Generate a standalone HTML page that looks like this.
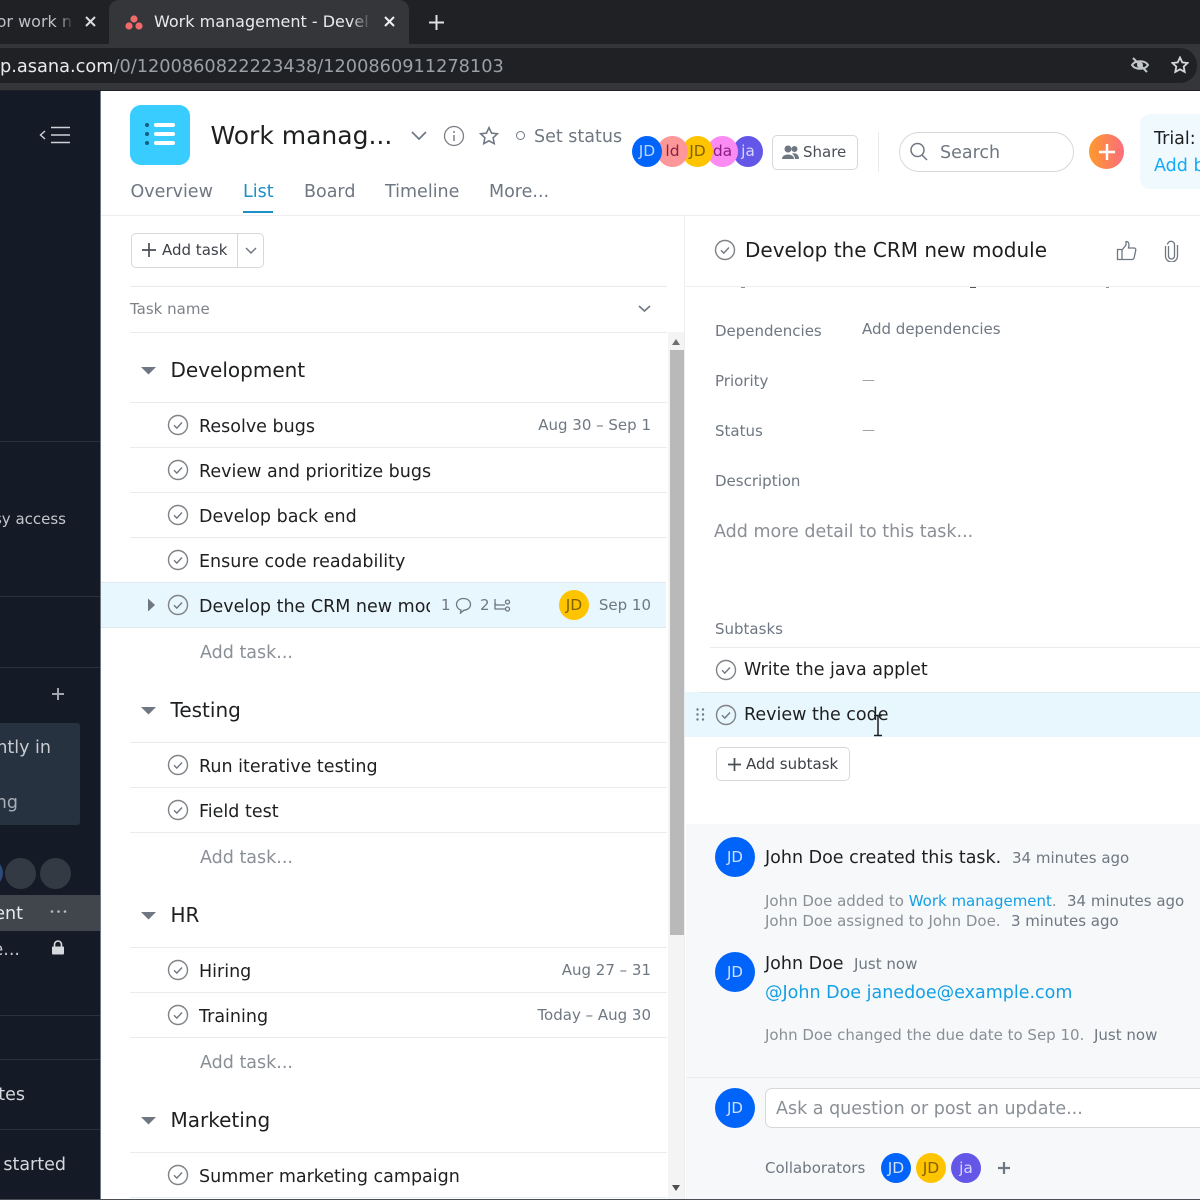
<!DOCTYPE html>
<html><head><meta charset="utf-8"><style>
html,body{margin:0;padding:0;background:#fff}
#p{position:relative;width:1200px;height:1200px;overflow:hidden;background:#fff;font-family:"DejaVu Sans","Liberation Sans",sans-serif;color:#1e1f21;filter:blur(.3px)}
#p div,#p span.t,#p svg{position:absolute}
.t{white-space:nowrap;line-height:0;height:0}
.g{color:#6f7782}.l{color:#8a8f96}
.sb{color:#c3c7cc}
.a{position:absolute;border-radius:50%;text-align:center;color:#fff;overflow:hidden}
.ln{background:#e8ecee;height:1px}
</style></head><body><div id="p">
<svg width="0" height="0" style="position:absolute"><defs>
<symbol id="c" viewBox="0 0 22 22"><circle cx="11" cy="11" r="9.5" fill="none" stroke="#7f8286" stroke-width="1.4"/><path d="M7 11.300l2.800 2.800 5.200-5.600" fill="none" stroke="#6f7782" stroke-width="1.400"/></symbol>
</defs></svg>

<!-- browser chrome -->
<div style="left:0;top:0;width:1200px;height:44px;background:#202124"></div>
<div style="left:109px;top:0;width:300px;height:44px;background:#35363a;border-radius:10px 10px 0 0"></div>
<div style="left:0;top:44px;width:1200px;height:46px;background:#35363a"></div>
<div style="left:0;top:90px;width:1200px;height:1px;background:#202124"></div>
<div style="left:0;top:48px;width:1197px;height:35px;background:#202124;border-radius:0 17px 17px 0"></div>
<span class="t" style="left:-9px;top:21px;font-size:16px;color:#bdc1c6;width:82px;overflow:hidden;height:24px;line-height:24px;margin-top:-11px">for work n</span>
<div style="left:58px;top:10px;width:16px;height:24px;background:linear-gradient(90deg,rgba(32,33,36,0),#202124)"></div>
<svg style="left:84px;top:15px" width="13" height="13"><path d="M2 2l9 9M11 2l-9 9" stroke="#dcdcdc" stroke-width="2"/></svg>
<svg style="left:125px;top:14px" width="18" height="17"><circle cx="9" cy="5" r="3.600" fill="#f06a6a"/><circle cx="4" cy="12" r="3.600" fill="#f06a6a"/><circle cx="14" cy="12" r="3.600" fill="#f06a6a"/></svg>
<span class="t" style="left:154px;top:21px;font-size:16px;color:#e8eaed;width:218px;overflow:hidden;height:24px;line-height:24px;margin-top:-11px">Work management - Devel</span>
<div style="left:350px;top:10px;width:22px;height:24px;background:linear-gradient(90deg,rgba(53,54,58,0),#35363a)"></div>
<svg style="left:383px;top:15px" width="13" height="13"><path d="M2 2l9 9M11 2l-9 9" stroke="#f0f0f0" stroke-width="2"/></svg>
<svg style="left:428px;top:14px" width="17" height="17"><path d="M8.500 1v15M1 8.500h15" stroke="#e0e0e0" stroke-width="2"/></svg>
<span class="t" style="left:0;top:67px;font-size:17.740px;color:#e8eaed">p.asana.com<span style="color:#9aa0a6">/0/1200860822223438/1200860911278103</span></span>
<svg style="left:1130px;top:55px" width="20" height="20" viewBox="0 0 20 20"><path d="M2 10c3-5 13-5 16 0c-3 5-13 5-16 0z" fill="none" stroke="#c4c7c9" stroke-width="2"/><circle cx="10" cy="10" r="3" fill="#c4c7c9"/><path d="M3 3l14 14" stroke="#c4c7c9" stroke-width="2"/></svg>
<svg style="left:1171px;top:56px" width="18" height="18" viewBox="0 0 18 18"><path d="M9 1.500l2.300 4.900 5.200.6-3.800 3.600 1 5.300L9 13.300l-4.700 2.600 1-5.300L1.500 7l5.200-.6z" fill="none" stroke="#d4d6d8" stroke-width="1.800"/></svg>

<!-- sidebar -->
<div style="left:0;top:91px;width:100px;height:1109px;background:#151b26"></div>
<div style="left:100px;top:91px;width:1px;height:1109px;background:#6f7782"></div>
<svg style="left:38px;top:125px" width="34" height="20" fill="none" stroke="#cfd2d6" stroke-width="1.400"><path d="M7 6l-4.500 4 4.500 4"/><path d="M13 2.500h19M13 10h19M13 17.500h19"/></svg>
<div style="left:0;top:441px;width:100px;height:1px;background:#2b323d"></div>
<div style="left:0;top:596px;width:100px;height:1px;background:#2b323d"></div>
<div style="left:0;top:667px;width:100px;height:1px;background:#2b323d"></div>
<div style="left:0;top:1015px;width:100px;height:1px;background:#2b323d"></div>
<div style="left:0;top:1059px;width:100px;height:1px;background:#2b323d"></div>
<div style="left:0;top:1129px;width:100px;height:1px;background:#2b323d"></div>
<span class="t sb" style="right:1134px;top:519px;font-size:15px">asy access</span>
<svg style="left:51px;top:687px" width="14" height="14"><path d="M7 1v12M1 7h12" stroke="#a2a6ac" stroke-width="2"/></svg>
<div style="left:0;top:723px;width:80px;height:102px;background:#273240;border-radius:0 3px 3px 0"></div>
<span class="t" style="right:1149px;top:748px;font-size:17.500px;color:#c8ccd1">ntly in</span>
<span class="t" style="right:1182px;top:803px;font-size:17.500px;color:#a9afb6">ng</span>
<div class="a" style="left:-29px;top:858px;width:32px;height:30px;background:#2f4a78"></div>
<div class="a" style="left:5px;top:858px;width:31px;height:31px;background:#343a43"></div>
<div class="a" style="left:40px;top:858px;width:31px;height:31px;background:#343a43"></div>
<div style="left:0;top:895px;width:100px;height:36px;background:#41454c"></div>
<span class="t" style="right:1177px;top:914px;font-size:17.500px;color:#e8eaec">ent</span>
<svg style="left:50px;top:909px" width="17" height="5" fill="#b7bbc1"><circle cx="2" cy="2.500" r="1.300"/><circle cx="8.500" cy="2.500" r="1.300"/><circle cx="15" cy="2.500" r="1.300"/></svg>
<span class="t" style="right:1180px;top:950px;font-size:17.500px;color:#c3c7cc">e...</span>
<svg style="left:51px;top:940px" width="14" height="15"><path d="M3.500 7V4.500a3.500 3.500 0 0 1 7 0V7" fill="none" stroke="#d5d8dd" stroke-width="1.600"/><rect x="1" y="6.500" width="12" height="8" rx="1" fill="#d5d8dd"/></svg>
<span class="t" style="right:1175px;top:1095px;font-size:17.500px;color:#d5d8dc">tes</span>
<span class="t" style="right:1134px;top:1165px;font-size:17.500px;color:#d5d8dc">started</span>

<!-- project header -->
<div style="left:130px;top:105px;width:60px;height:60px;background:#38ccff;border-radius:11px"></div>
<svg style="left:144px;top:121px" width="32" height="28" fill="#fff"><circle cx="3" cy="4" r="2" fill="#0f5f86"/><circle cx="3" cy="13" r="2" fill="#0f5f86"/><circle cx="3" cy="22" r="2" fill="#0f5f86"/><rect x="10" y="2" width="21" height="4" rx="2"/><rect x="10" y="11" width="21" height="4" rx="2"/><rect x="10" y="20" width="21" height="4" rx="2"/></svg>
<span class="t" style="left:210.500px;top:136px;font-size:25px">Work manag...</span>
<svg style="left:410px;top:130px" width="18" height="12"><path d="M2 2l7 7 7-7" fill="none" stroke="#6f7782" stroke-width="1.700"/></svg>
<svg style="left:443px;top:125px" width="22" height="22"><circle cx="11" cy="11" r="9.500" fill="none" stroke="#7b7f85" stroke-width="1.300"/><path d="M11 10v6" stroke="#7b7f85" stroke-width="1.500"/><circle cx="11" cy="7" r="1" fill="#7b7f85"/></svg>
<svg style="left:479px;top:126px" width="20" height="20" viewBox="0 0 18 18"><path d="M9 1.500l2.300 4.900 5.200.6-3.800 3.600 1 5.300L9 13.300l-4.700 2.600 1-5.300L1.500 7l5.200-.6z" fill="none" stroke="#6f7782" stroke-width="1.400"/></svg>
<div style="left:516px;top:131px;width:7px;height:7px;border:1.500px solid #6f7782;border-radius:50%"></div>
<span class="t g" style="left:534px;top:137px;font-size:17.500px">Set status</span>
<span class="t g" style="left:130.500px;top:192px;font-size:17.500px">Overview</span>
<span class="t" style="left:243px;top:192px;font-size:17.500px;color:#1c8fc4">List</span>
<span class="t g" style="left:304px;top:192px;font-size:17.500px">Board</span>
<span class="t g" style="left:385px;top:192px;font-size:17.500px">Timeline</span>
<span class="t g" style="left:489px;top:192px;font-size:17.500px">More...</span>
<div style="left:243px;top:211px;width:30px;height:2px;background:#1c8fc4"></div>
<div class="ln" style="left:101px;top:215px;width:1099px;background:#eceef0"></div>

<!-- avatars -->
<div class="a" style="left:733px;top:136px;width:30px;height:31px;background:#6457e8;line-height:31px;font-size:15.500px;color:#d8d5ff">ja</div>
<div class="a" style="left:707px;top:136px;width:31px;height:31px;background:#fb8bf2;line-height:31px;font-size:15.500px;color:#8a1d84">da</div>
<div class="a" style="left:682px;top:136px;width:31px;height:31px;background:#ffc400;line-height:31px;font-size:15.500px;color:#7e6100">JD</div>
<div class="a" style="left:657px;top:136px;width:31px;height:31px;background:#fc979a;line-height:31px;font-size:15.500px;color:#8c1f3a">ld</div>
<div class="a" style="left:632px;top:136px;width:30px;height:31px;background:#0064fb;line-height:31px;font-size:15.500px;color:#b9d4ff">JD</div>

<div style="left:772px;top:135px;width:84px;height:33px;border:1.500px solid #d5d9dc;border-radius:5px"></div>
<svg style="left:782px;top:145px" width="17" height="15" fill="#6f7782"><circle cx="6" cy="4" r="3.500"/><circle cx="12.500" cy="4" r="3"/><path d="M0 14c0-6 12-6 12 0z"/><path d="M10 8.500c4-1 7 1 7 5.500h-4c0-2-1-4-3-5.500z"/></svg>
<span class="t" style="left:803px;top:152px;font-size:15px;color:#4a4f56">Share</span>
<div style="left:878px;top:132px;width:1px;height:40px;background:#e8ecee"></div>
<div style="left:899px;top:132px;width:173px;height:38px;border:1.500px solid #d5d9dc;border-radius:20px"></div>
<svg style="left:909px;top:142px" width="20" height="20" fill="none" stroke="#6f7782" stroke-width="1.500"><circle cx="8.500" cy="8" r="6.500"/><path d="M13 13l5 5"/></svg>
<span class="t g" style="left:940px;top:153px;font-size:17.500px">Search</span>
<div class="a" style="left:1089px;top:134px;width:35px;height:35px;background:linear-gradient(90deg,#fd9a2c,#fc6d7d)"></div>
<svg style="left:1098px;top:143px" width="18" height="18"><path d="M9 1v16M1 9h16" stroke="#fff" stroke-width="2.500"/></svg>
<div style="left:1140px;top:114px;width:70px;height:75px;background:#f0f9fe;border-radius:10px"></div>
<span class="t" style="left:1154px;top:139px;font-size:17.500px">Trial:</span>
<span class="t" style="left:1154px;top:166px;font-size:17.500px;color:#14aaf5">Add b</span>

<!-- list -->
<div style="left:131px;top:233px;width:131px;height:33px;border:1.500px solid #d5d9dc;border-radius:5px"></div>
<div style="left:237px;top:234px;width:1px;height:33px;background:#d5d9dc"></div>
<svg style="left:142px;top:243px" width="14" height="14"><path d="M7 0v14M0 7h14" stroke="#4a4f56" stroke-width="1.700"/></svg>
<span class="t" style="left:162px;top:250px;font-size:15px;color:#3d4147">Add task</span>
<svg style="left:245px;top:247px" width="12" height="8"><path d="M1 1l5 5 5-5" fill="none" stroke="#6f7782" stroke-width="1.500"/></svg>
<div class="ln" style="left:130px;top:286px;width:537px"></div>
<span class="t" style="left:130px;top:309px;font-size:15px;color:#7d8289">Task name</span>
<svg style="left:638px;top:305px" width="13" height="8"><path d="M1 1l5.500 5 5.500-5" fill="none" stroke="#6f7782" stroke-width="1.600"/></svg>
<div class="ln" style="left:130px;top:332px;width:537px"></div>

<div style="left:668px;top:332px;width:16px;height:868px;background:#f4f4f4"></div>
<div style="left:669.500px;top:350px;width:14px;height:585px;background:#b9b9b9"></div>
<svg style="left:671px;top:338px" width="10" height="8"><path d="M5 1l4 6H1z" fill="#6f6f6f"/></svg>
<svg style="left:671px;top:1184px" width="10" height="8"><path d="M5 7l4-6H1z" fill="#505050"/></svg>

<!-- sections -->
<svg style="left:141px;top:366px" width="15" height="9"><path d="M0 1h15L7.500 8.500z" fill="#6f7782"/></svg>
<span class="t" style="left:170.500px;top:370px;font-size:20px">Development</span>
<div class="ln" style="left:130px;top:402px;width:537px"></div>

<div style="left:101px;top:582px;width:565px;height:45px;background:#e8f6fd"></div>

<svg style="left:167px;top:414px" width="22" height="22"><use href="#c"/></svg>
<span class="t" style="left:199px;top:427px;font-size:17.500px">Resolve bugs</span>
<span class="t g" style="right:549px;top:425px;font-size:15px">Aug 30 – Sep 1</span>
<div class="ln" style="left:130px;top:447px;width:537px"></div>
<svg style="left:167px;top:459px" width="22" height="22"><use href="#c"/></svg>
<span class="t" style="left:199px;top:472px;font-size:17.500px">Review and prioritize bugs</span>
<div class="ln" style="left:130px;top:492px;width:537px"></div>
<svg style="left:167px;top:504px" width="22" height="22"><use href="#c"/></svg>
<span class="t" style="left:199px;top:517px;font-size:17.500px">Develop back end</span>
<div class="ln" style="left:130px;top:537px;width:537px"></div>
<svg style="left:167px;top:549px" width="22" height="22"><use href="#c"/></svg>
<span class="t" style="left:199px;top:562px;font-size:17.500px">Ensure code readability</span>
<div class="ln" style="left:101px;top:582px;width:565px;background:#dfeaf0"></div>
<svg style="left:147px;top:598px" width="9" height="14"><path d="M1 0.500l7 6.500-7 6.500z" fill="#6f7782"/></svg>
<svg style="left:167px;top:594px" width="22" height="22"><use href="#c"/></svg>
<span class="t" style="left:199px;top:606px;font-size:17.500px;width:231px;overflow:hidden;height:26px;line-height:26px;margin-top:-12px">Develop the CRM new module</span>
<span class="t g" style="left:441px;top:605px;font-size:15px">1</span>
<svg style="left:455px;top:597px" width="17" height="17" fill="none" stroke="#6f7782" stroke-width="1.300"><path d="M8.500 1.500c-4 0-7 2.500-7 6 0 2.500 2 5 4.500 5.500l-.5 3 3.500-2.800c3.500 0 6.500-2.500 6.500-5.700 0-3.500-3-6-7-6z"/></svg>
<span class="t g" style="left:480px;top:605px;font-size:15px">2</span>
<svg style="left:494px;top:598px" width="17" height="15" fill="none" stroke="#6f7782" stroke-width="1.300"><path d="M1 1v10h10M1 5c0 1 1 2 2 2h8"/><circle cx="13.500" cy="4" r="2"/><circle cx="13.500" cy="11" r="2"/></svg>
<div class="a" style="left:559px;top:590px;width:30px;height:30px;background:#ffc400;line-height:30px;font-size:15.500px;color:#7e6100">JD</div>
<span class="t g" style="right:549px;top:605px;font-size:15px">Sep 10</span>
<div class="ln" style="left:101px;top:627px;width:565px;background:#dfeaf0"></div>
<span class="t l" style="left:200px;top:653px;font-size:17.500px">Add task...</span>

<svg style="left:141px;top:706px" width="15" height="9"><path d="M0 1h15L7.500 8.500z" fill="#6f7782"/></svg>
<span class="t" style="left:170.500px;top:710px;font-size:20px">Testing</span>
<div class="ln" style="left:130px;top:742px;width:537px"></div>
<svg style="left:167px;top:754px" width="22" height="22"><use href="#c"/></svg>
<span class="t" style="left:199px;top:767px;font-size:17.500px">Run iterative testing</span>
<div class="ln" style="left:130px;top:787px;width:537px"></div>
<svg style="left:167px;top:799px" width="22" height="22"><use href="#c"/></svg>
<span class="t" style="left:199px;top:812px;font-size:17.500px">Field test</span>
<div class="ln" style="left:130px;top:832px;width:537px"></div>
<span class="t l" style="left:200px;top:858px;font-size:17.500px">Add task...</span>

<svg style="left:141px;top:911px" width="15" height="9"><path d="M0 1h15L7.500 8.500z" fill="#6f7782"/></svg>
<span class="t" style="left:170.500px;top:915px;font-size:20px">HR</span>
<div class="ln" style="left:130px;top:947px;width:537px"></div>
<svg style="left:167px;top:959px" width="22" height="22"><use href="#c"/></svg>
<span class="t" style="left:199px;top:972px;font-size:17.500px">Hiring</span>
<span class="t g" style="right:549px;top:970px;font-size:15px">Aug 27 – 31</span>
<div class="ln" style="left:130px;top:992px;width:537px"></div>
<svg style="left:167px;top:1004px" width="22" height="22"><use href="#c"/></svg>
<span class="t" style="left:199px;top:1017px;font-size:17.500px">Training</span>
<span class="t g" style="right:549px;top:1015px;font-size:15px">Today – Aug 30</span>
<div class="ln" style="left:130px;top:1037px;width:537px"></div>
<span class="t l" style="left:200px;top:1063px;font-size:17.500px">Add task...</span>

<svg style="left:141px;top:1116px" width="15" height="9"><path d="M0 1h15L7.500 8.500z" fill="#6f7782"/></svg>
<span class="t" style="left:170.500px;top:1120px;font-size:20px">Marketing</span>
<div class="ln" style="left:130px;top:1152px;width:537px"></div>
<svg style="left:167px;top:1164px" width="22" height="22"><use href="#c"/></svg>
<span class="t" style="left:199px;top:1177px;font-size:17.500px">Summer marketing campaign</span>
<div class="ln" style="left:130px;top:1197px;width:537px"></div>

<!-- detail pane -->
<div style="left:684px;top:216px;width:1px;height:984px;background:#eceef0"></div>
<svg style="left:714px;top:239px" width="22" height="22"><use href="#c"/></svg>
<span class="t" style="left:745px;top:250px;font-size:20px">Develop the CRM new module</span>
<svg style="left:1116px;top:240px" width="21" height="21" fill="none" stroke="#6f7782" stroke-width="1.300"><path d="M1.500 9.500h4.500v10H1.500zM6 10l4-5V1.500c2 0 3 1.500 3 3.500l-.5 3H18c1.500 0 2 1 1.700 2.500l-1.500 7c-.3 1.500-1 2-2.200 2H6"/></svg>
<svg style="left:1164px;top:240px" width="15" height="22" fill="none" stroke="#6f7782" stroke-width="1.300"><path d="M4.500 6v10a3 3 0 0 0 6 0V5a3.500 3.500 0 0 0-7-.5"/><path d="M1.500 6v10a6 6 0 0 0 12 0V5"/></svg>
<div style="left:686px;top:286px;width:514px;height:1px;background:#eceef0"></div>
<div style="left:741px;top:287px;width:4px;height:1px;background:#8a8f96"></div>
<div style="left:970px;top:287px;width:6px;height:1px;background:#555"></div>
<div style="left:1106px;top:287px;width:3px;height:1px;background:#8a8f96"></div>
<span class="t g" style="left:715px;top:331px;font-size:15px">Dependencies</span>
<span class="t g" style="left:862px;top:329px;font-size:15px">Add dependencies</span>
<span class="t g" style="left:715px;top:381px;font-size:15px">Priority</span>
<span class="t" style="left:862px;top:381px;font-size:13px;color:#9ca0a5">—</span>
<span class="t g" style="left:715px;top:431px;font-size:15px">Status</span>
<span class="t" style="left:862px;top:431px;font-size:13px;color:#9ca0a5">—</span>
<span class="t g" style="left:715px;top:481px;font-size:15px">Description</span>
<span class="t l" style="left:714px;top:532px;font-size:17.500px">Add more detail to this task...</span>
<span class="t g" style="left:715px;top:629px;font-size:15px">Subtasks</span>
<div class="ln" style="left:710px;top:647px;width:490px"></div>
<svg style="left:715px;top:659px" width="22" height="22"><use href="#c"/></svg>
<span class="t" style="left:744px;top:670px;font-size:17.500px">Write the java applet</span>
<div style="left:685px;top:692px;width:515px;height:45px;background:#e8f6fd"></div>
<div class="ln" style="left:700px;top:692px;width:500px;background:#dfeaf0"></div>
<svg style="left:696px;top:708px" width="9" height="13" fill="#6f7782"><circle cx="1.500" cy="1.500" r="1.200"/><circle cx="7" cy="1.500" r="1.200"/><circle cx="1.500" cy="6.500" r="1.200"/><circle cx="7" cy="6.500" r="1.200"/><circle cx="1.500" cy="11.500" r="1.200"/><circle cx="7" cy="11.500" r="1.200"/></svg>
<svg style="left:715px;top:704px" width="22" height="22"><use href="#c"/></svg>
<span class="t" style="left:744px;top:715px;font-size:17.500px">Review the code</span>
<svg style="left:873px;top:714px" width="10" height="23"><path d="M1 1.500h8M5 1.500v20M1 21.500h8" stroke="#1e1f21" stroke-width="1.500" fill="none"/></svg>
<div style="left:716px;top:747px;width:132px;height:32px;border:1.500px solid #d5d9dc;border-radius:5px"></div>
<svg style="left:728px;top:758px" width="13" height="13"><path d="M6.500 0v13M0 6.500h13" stroke="#4a4f56" stroke-width="1.700"/></svg>
<span class="t" style="left:746px;top:764px;font-size:15px;color:#3d4147">Add subtask</span>

<div style="left:686px;top:824px;width:514px;height:376px;background:#f6f8f9"></div>
<div class="a" style="left:715px;top:837px;width:40px;height:40px;background:#0064fb;line-height:40px;font-size:15px;color:#cfe0ff">JD</div>
<span class="t" style="left:765px;top:858px;font-size:17.500px">John Doe created this task.</span>
<span class="t g" style="left:1012px;top:858px;font-size:15px">34 minutes ago</span>
<span class="t l" style="left:765px;top:901px;font-size:15px">John Doe added to <span style="color:#14a0e6">Work management</span>.</span>
<span class="t g" style="left:1067px;top:901px;font-size:15px">34 minutes ago</span>
<span class="t l" style="left:765px;top:921px;font-size:15px">John Doe assigned to John Doe.</span>
<span class="t g" style="left:1011px;top:921px;font-size:15px">3 minutes ago</span>
<div class="a" style="left:715px;top:952px;width:40px;height:40px;background:#0064fb;line-height:40px;font-size:15px;color:#cfe0ff">JD</div>
<span class="t" style="left:765px;top:964px;font-size:17.500px">John Doe</span>
<span class="t g" style="left:854px;top:964px;font-size:15px">Just now</span>
<span class="t" style="left:765px;top:993px;font-size:17.500px;color:#14a0e6">@John Doe janedoe@example.com</span>
<span class="t l" style="left:765px;top:1035px;font-size:15px">John Doe changed the due date to Sep 10.</span>
<span class="t g" style="left:1094px;top:1035px;font-size:15px">Just now</span>
<div class="ln" style="left:686px;top:1077px;width:514px"></div>
<div class="a" style="left:715px;top:1088px;width:40px;height:40px;background:#0064fb;line-height:40px;font-size:15px;color:#cfe0ff">JD</div>
<div style="left:765px;top:1088px;width:460px;height:38px;background:#fff;border:1.500px solid #d5d9dc;border-radius:7px"></div>
<span class="t l" style="left:776px;top:1109px;font-size:17.500px">Ask a question or post an update...</span>
<span class="t g" style="left:765px;top:1168px;font-size:15px">Collaborators</span>
<div class="a" style="left:881px;top:1153px;width:30px;height:30px;background:#0064fb;line-height:30px;font-size:15.500px;color:#cfe0ff">JD</div>
<div class="a" style="left:916px;top:1153px;width:30px;height:30px;background:#ffc400;line-height:30px;font-size:15.500px;color:#7e6100">JD</div>
<div class="a" style="left:951px;top:1153px;width:30px;height:30px;background:#6457e8;line-height:30px;font-size:15.500px;color:#d8d5ff">ja</div>
<svg style="left:997px;top:1161px" width="14" height="14"><path d="M7 1v12M1 7h12" stroke="#6f7782" stroke-width="2.200"/></svg>
<div style="left:0;top:1199px;width:1200px;height:1px;background:#4a4f56"></div>
</div></body></html>
